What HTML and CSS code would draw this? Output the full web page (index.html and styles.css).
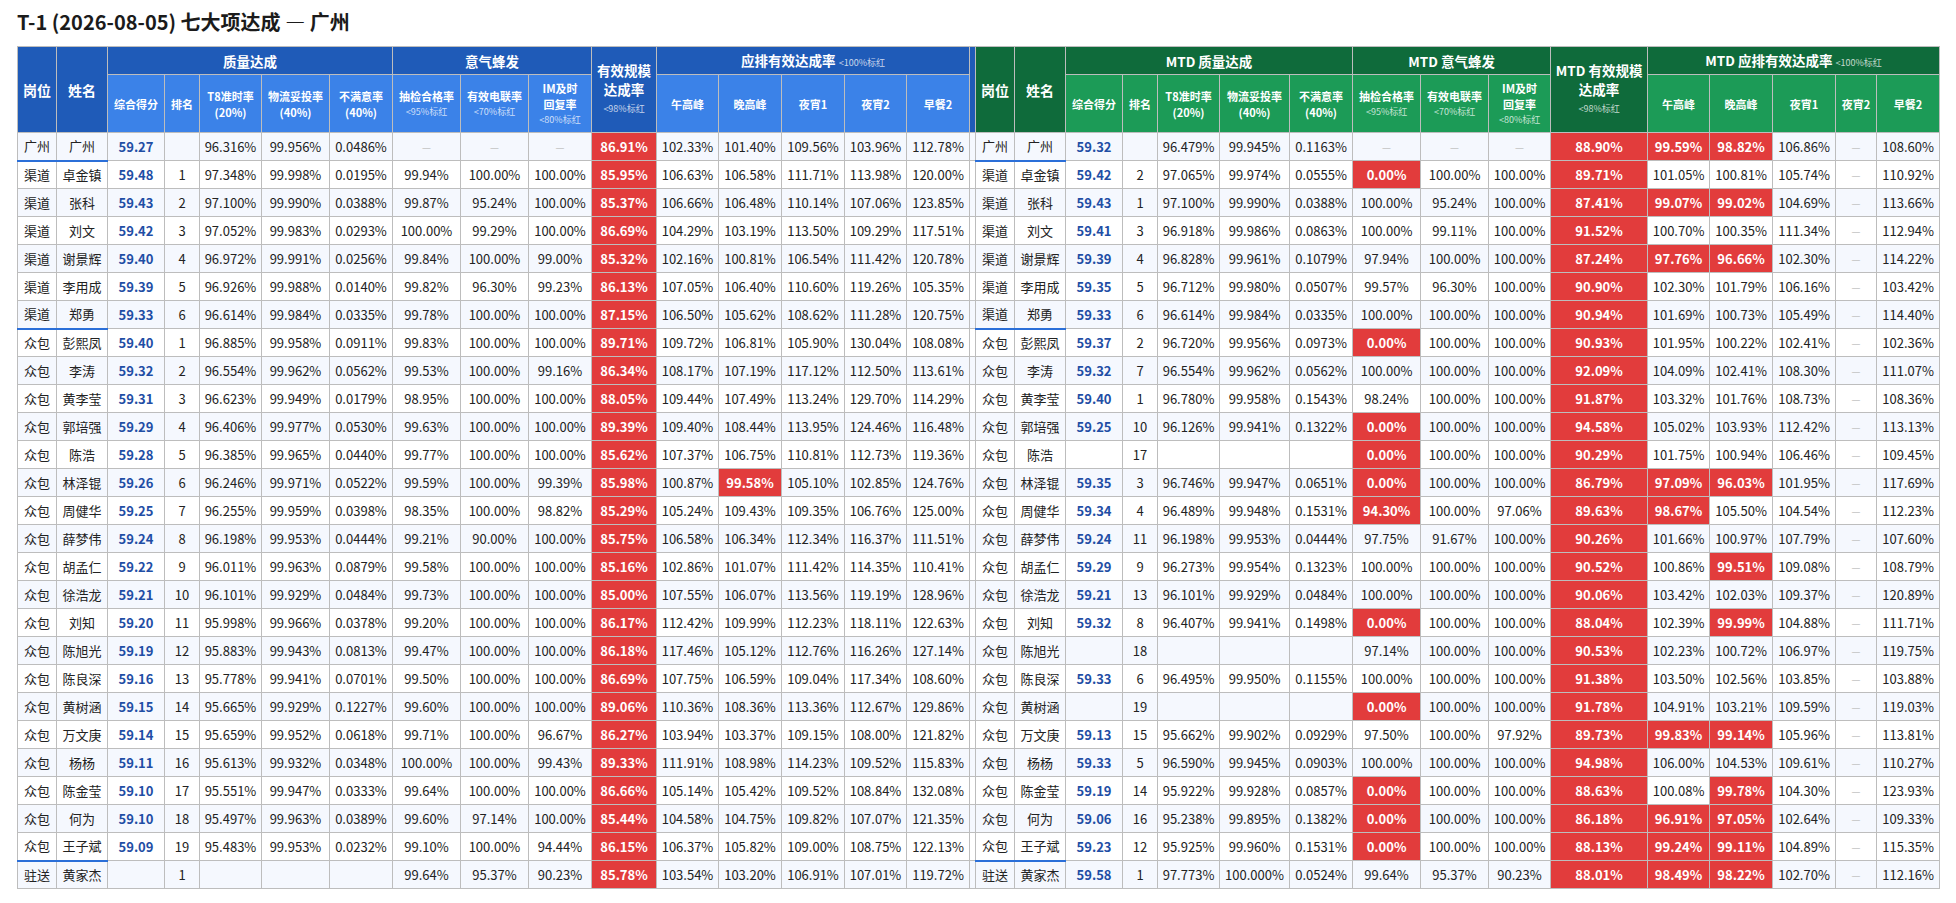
FILE: index.html
```html
<!DOCTYPE html>
<html lang="zh-CN">
<head>
<meta charset="utf-8">
<title>T-1 七大项达成 — 广州</title>
<link rel="stylesheet" href="styles.css">
</head>
<body>
<h1 class="title">T-1 (2026-08-05) 七大项达成 — 广州</h1>
<table class="grid">
<colgroup>
<col class="w39"><col class="w51"><col class="w57"><col class="w35"><col class="w62"><col class="w68"><col class="w63"><col class="w68"><col class="w68"><col class="w63"><col class="w65"><col class="w62"><col class="w63"><col class="w63"><col class="w62"><col class="w63">
<col class="w6">
<col class="w39"><col class="w51"><col class="w57"><col class="w35"><col class="w62"><col class="w70"><col class="w63"><col class="w68"><col class="w68"><col class="w62"><col class="w97"><col class="w62"><col class="w63"><col class="w63"><col class="w41"><col class="w63">
</colgroup>
<thead>
<tr class="h1">
<th rowspan="2" class="bd key">岗位</th>
<th rowspan="2" class="bd key">姓名</th>
<th colspan="5" class="bd">质量达成</th>
<th colspan="3" class="bd">意气蜂发</th>
<th rowspan="2" class="bd big">有效规模<br>达成率<small>&lt;98%标红</small></th>
<th colspan="5" class="bd">应排有效达成率 <small>&lt;100%标红</small></th>
<th rowspan="2" class="bd gap"></th>
<th rowspan="2" class="gd key">岗位</th>
<th rowspan="2" class="gd key">姓名</th>
<th colspan="5" class="gd">MTD 质量达成</th>
<th colspan="3" class="gd">MTD 意气蜂发</th>
<th rowspan="2" class="gd big">MTD 有效规模<br>达成率<small>&lt;98%标红</small></th>
<th colspan="5" class="gd">MTD 应排有效达成率 <small>&lt;100%标红</small></th>
</tr>
<tr class="h2">
<th class="bl">综合得分</th><th class="bl">排名</th><th class="bl">T8准时率<br>(20%)</th><th class="bl">物流妥投率<br>(40%)</th><th class="bl">不满意率<br>(40%)</th><th class="bl">抽检合格率<small>&lt;95%标红</small></th><th class="bl">有效电联率<small>&lt;70%标红</small></th><th class="bl">IM及时<br>回复率<small>&lt;80%标红</small></th><th class="bl">午高峰</th><th class="bl">晚高峰</th><th class="bl">夜宵1</th><th class="bl">夜宵2</th><th class="bl">早餐2</th>
<th class="gl">综合得分</th><th class="gl">排名</th><th class="gl">T8准时率<br>(20%)</th><th class="gl">物流妥投率<br>(40%)</th><th class="gl">不满意率<br>(40%)</th><th class="gl">抽检合格率<small>&lt;95%标红</small></th><th class="gl">有效电联率<small>&lt;70%标红</small></th><th class="gl">IM及时<br>回复率<small>&lt;80%标红</small></th><th class="gl">午高峰</th><th class="gl">晚高峰</th><th class="gl">夜宵1</th><th class="gl">夜宵2</th><th class="gl">早餐2</th>
</tr>
</thead>
<tbody>
<tr class="ge"><td>广州</td><td>广州</td><td class="s">59.27</td><td></td><td>96.316%</td><td>99.956%</td><td>0.0486%</td><td class="d">—</td><td class="d">—</td><td class="d">—</td><td class="r">86.91%</td><td>102.33%</td><td>101.40%</td><td>109.56%</td><td>103.96%</td><td>112.78%</td><td class="gp"></td><td>广州</td><td>广州</td><td class="s">59.32</td><td></td><td>96.479%</td><td>99.945%</td><td>0.1163%</td><td class="d">—</td><td class="d">—</td><td class="d">—</td><td class="r">88.90%</td><td class="r">99.59%</td><td class="r">98.82%</td><td>106.86%</td><td class="d">—</td><td>108.60%</td></tr>
<tr><td>渠道</td><td>卓金镇</td><td class="s">59.48</td><td>1</td><td>97.348%</td><td>99.998%</td><td>0.0195%</td><td>99.94%</td><td>100.00%</td><td>100.00%</td><td class="r">85.95%</td><td>106.63%</td><td>106.58%</td><td>111.71%</td><td>113.98%</td><td>120.00%</td><td class="gp"></td><td>渠道</td><td>卓金镇</td><td class="s">59.42</td><td>2</td><td>97.065%</td><td>99.974%</td><td>0.0555%</td><td class="r">0.00%</td><td>100.00%</td><td>100.00%</td><td class="r">89.71%</td><td>101.05%</td><td>100.81%</td><td>105.74%</td><td class="d">—</td><td>110.92%</td></tr>
<tr><td>渠道</td><td>张科</td><td class="s">59.43</td><td>2</td><td>97.100%</td><td>99.990%</td><td>0.0388%</td><td>99.87%</td><td>95.24%</td><td>100.00%</td><td class="r">85.37%</td><td>106.66%</td><td>106.48%</td><td>110.14%</td><td>107.06%</td><td>123.85%</td><td class="gp"></td><td>渠道</td><td>张科</td><td class="s">59.43</td><td>1</td><td>97.100%</td><td>99.990%</td><td>0.0388%</td><td>100.00%</td><td>95.24%</td><td>100.00%</td><td class="r">87.41%</td><td class="r">99.07%</td><td class="r">99.02%</td><td>104.69%</td><td class="d">—</td><td>113.66%</td></tr>
<tr><td>渠道</td><td>刘文</td><td class="s">59.42</td><td>3</td><td>97.052%</td><td>99.983%</td><td>0.0293%</td><td>100.00%</td><td>99.29%</td><td>100.00%</td><td class="r">86.69%</td><td>104.29%</td><td>103.19%</td><td>113.50%</td><td>109.29%</td><td>117.51%</td><td class="gp"></td><td>渠道</td><td>刘文</td><td class="s">59.41</td><td>3</td><td>96.918%</td><td>99.986%</td><td>0.0863%</td><td>100.00%</td><td>99.11%</td><td>100.00%</td><td class="r">91.52%</td><td>100.70%</td><td>100.35%</td><td>111.34%</td><td class="d">—</td><td>112.94%</td></tr>
<tr><td>渠道</td><td>谢景辉</td><td class="s">59.40</td><td>4</td><td>96.972%</td><td>99.991%</td><td>0.0256%</td><td>99.84%</td><td>100.00%</td><td>99.00%</td><td class="r">85.32%</td><td>102.16%</td><td>100.81%</td><td>106.54%</td><td>111.42%</td><td>120.78%</td><td class="gp"></td><td>渠道</td><td>谢景辉</td><td class="s">59.39</td><td>4</td><td>96.828%</td><td>99.961%</td><td>0.1079%</td><td>97.94%</td><td>100.00%</td><td>100.00%</td><td class="r">87.24%</td><td class="r">97.76%</td><td class="r">96.66%</td><td>102.30%</td><td class="d">—</td><td>114.22%</td></tr>
<tr><td>渠道</td><td>李用成</td><td class="s">59.39</td><td>5</td><td>96.926%</td><td>99.988%</td><td>0.0140%</td><td>99.82%</td><td>96.30%</td><td>99.23%</td><td class="r">86.13%</td><td>107.05%</td><td>106.40%</td><td>110.60%</td><td>119.26%</td><td>105.35%</td><td class="gp"></td><td>渠道</td><td>李用成</td><td class="s">59.35</td><td>5</td><td>96.712%</td><td>99.980%</td><td>0.0507%</td><td>99.57%</td><td>96.30%</td><td>100.00%</td><td class="r">90.90%</td><td>102.30%</td><td>101.79%</td><td>106.16%</td><td class="d">—</td><td>103.42%</td></tr>
<tr class="ge"><td>渠道</td><td>郑勇</td><td class="s">59.33</td><td>6</td><td>96.614%</td><td>99.984%</td><td>0.0335%</td><td>99.78%</td><td>100.00%</td><td>100.00%</td><td class="r">87.15%</td><td>106.50%</td><td>105.62%</td><td>108.62%</td><td>111.28%</td><td>120.75%</td><td class="gp"></td><td>渠道</td><td>郑勇</td><td class="s">59.33</td><td>6</td><td>96.614%</td><td>99.984%</td><td>0.0335%</td><td>100.00%</td><td>100.00%</td><td>100.00%</td><td class="r">90.94%</td><td>101.69%</td><td>100.73%</td><td>105.49%</td><td class="d">—</td><td>114.40%</td></tr>
<tr><td>众包</td><td>彭熙凤</td><td class="s">59.40</td><td>1</td><td>96.885%</td><td>99.958%</td><td>0.0911%</td><td>99.83%</td><td>100.00%</td><td>100.00%</td><td class="r">89.71%</td><td>109.72%</td><td>106.81%</td><td>105.90%</td><td>130.04%</td><td>108.08%</td><td class="gp"></td><td>众包</td><td>彭熙凤</td><td class="s">59.37</td><td>2</td><td>96.720%</td><td>99.956%</td><td>0.0973%</td><td class="r">0.00%</td><td>100.00%</td><td>100.00%</td><td class="r">90.93%</td><td>101.95%</td><td>100.22%</td><td>102.41%</td><td class="d">—</td><td>102.36%</td></tr>
<tr><td>众包</td><td>李涛</td><td class="s">59.32</td><td>2</td><td>96.554%</td><td>99.962%</td><td>0.0562%</td><td>99.53%</td><td>100.00%</td><td>99.16%</td><td class="r">86.34%</td><td>108.17%</td><td>107.19%</td><td>117.12%</td><td>112.50%</td><td>113.61%</td><td class="gp"></td><td>众包</td><td>李涛</td><td class="s">59.32</td><td>7</td><td>96.554%</td><td>99.962%</td><td>0.0562%</td><td>100.00%</td><td>100.00%</td><td>100.00%</td><td class="r">92.09%</td><td>104.09%</td><td>102.41%</td><td>108.30%</td><td class="d">—</td><td>111.07%</td></tr>
<tr><td>众包</td><td>黄李莹</td><td class="s">59.31</td><td>3</td><td>96.623%</td><td>99.949%</td><td>0.0179%</td><td>98.95%</td><td>100.00%</td><td>100.00%</td><td class="r">88.05%</td><td>109.44%</td><td>107.49%</td><td>113.24%</td><td>129.70%</td><td>114.29%</td><td class="gp"></td><td>众包</td><td>黄李莹</td><td class="s">59.40</td><td>1</td><td>96.780%</td><td>99.958%</td><td>0.1543%</td><td>98.24%</td><td>100.00%</td><td>100.00%</td><td class="r">91.87%</td><td>103.32%</td><td>101.76%</td><td>108.73%</td><td class="d">—</td><td>108.36%</td></tr>
<tr><td>众包</td><td>郭培强</td><td class="s">59.29</td><td>4</td><td>96.406%</td><td>99.977%</td><td>0.0530%</td><td>99.63%</td><td>100.00%</td><td>100.00%</td><td class="r">89.39%</td><td>109.40%</td><td>108.44%</td><td>113.95%</td><td>124.46%</td><td>116.48%</td><td class="gp"></td><td>众包</td><td>郭培强</td><td class="s">59.25</td><td>10</td><td>96.126%</td><td>99.941%</td><td>0.1322%</td><td class="r">0.00%</td><td>100.00%</td><td>100.00%</td><td class="r">94.58%</td><td>105.02%</td><td>103.93%</td><td>112.42%</td><td class="d">—</td><td>113.13%</td></tr>
<tr><td>众包</td><td>陈浩</td><td class="s">59.28</td><td>5</td><td>96.385%</td><td>99.965%</td><td>0.0440%</td><td>99.77%</td><td>100.00%</td><td>100.00%</td><td class="r">85.62%</td><td>107.37%</td><td>106.75%</td><td>110.81%</td><td>112.73%</td><td>119.36%</td><td class="gp"></td><td>众包</td><td>陈浩</td><td class="s"></td><td>17</td><td></td><td></td><td></td><td class="r">0.00%</td><td>100.00%</td><td>100.00%</td><td class="r">90.29%</td><td>101.75%</td><td>100.94%</td><td>106.46%</td><td class="d">—</td><td>109.45%</td></tr>
<tr><td>众包</td><td>林泽锟</td><td class="s">59.26</td><td>6</td><td>96.246%</td><td>99.971%</td><td>0.0522%</td><td>99.59%</td><td>100.00%</td><td>99.39%</td><td class="r">85.98%</td><td>100.87%</td><td class="r">99.58%</td><td>105.10%</td><td>102.85%</td><td>124.76%</td><td class="gp"></td><td>众包</td><td>林泽锟</td><td class="s">59.35</td><td>3</td><td>96.746%</td><td>99.947%</td><td>0.0651%</td><td class="r">0.00%</td><td>100.00%</td><td>100.00%</td><td class="r">86.79%</td><td class="r">97.09%</td><td class="r">96.03%</td><td>101.95%</td><td class="d">—</td><td>117.69%</td></tr>
<tr><td>众包</td><td>周健华</td><td class="s">59.25</td><td>7</td><td>96.255%</td><td>99.959%</td><td>0.0398%</td><td>98.35%</td><td>100.00%</td><td>98.82%</td><td class="r">85.29%</td><td>105.24%</td><td>109.43%</td><td>109.35%</td><td>106.76%</td><td>125.00%</td><td class="gp"></td><td>众包</td><td>周健华</td><td class="s">59.34</td><td>4</td><td>96.489%</td><td>99.948%</td><td>0.1531%</td><td class="r">94.30%</td><td>100.00%</td><td>97.06%</td><td class="r">89.63%</td><td class="r">98.67%</td><td>105.50%</td><td>104.54%</td><td class="d">—</td><td>112.23%</td></tr>
<tr><td>众包</td><td>薛梦伟</td><td class="s">59.24</td><td>8</td><td>96.198%</td><td>99.953%</td><td>0.0444%</td><td>99.21%</td><td>90.00%</td><td>100.00%</td><td class="r">85.75%</td><td>106.58%</td><td>106.34%</td><td>112.34%</td><td>116.37%</td><td>111.51%</td><td class="gp"></td><td>众包</td><td>薛梦伟</td><td class="s">59.24</td><td>11</td><td>96.198%</td><td>99.953%</td><td>0.0444%</td><td>97.75%</td><td>91.67%</td><td>100.00%</td><td class="r">90.26%</td><td>101.66%</td><td>100.97%</td><td>107.79%</td><td class="d">—</td><td>107.60%</td></tr>
<tr><td>众包</td><td>胡孟仁</td><td class="s">59.22</td><td>9</td><td>96.011%</td><td>99.963%</td><td>0.0879%</td><td>99.58%</td><td>100.00%</td><td>100.00%</td><td class="r">85.16%</td><td>102.86%</td><td>101.07%</td><td>111.42%</td><td>114.35%</td><td>110.41%</td><td class="gp"></td><td>众包</td><td>胡孟仁</td><td class="s">59.29</td><td>9</td><td>96.273%</td><td>99.954%</td><td>0.1323%</td><td>100.00%</td><td>100.00%</td><td>100.00%</td><td class="r">90.52%</td><td>100.86%</td><td class="r">99.51%</td><td>109.08%</td><td class="d">—</td><td>108.79%</td></tr>
<tr><td>众包</td><td>徐浩龙</td><td class="s">59.21</td><td>10</td><td>96.101%</td><td>99.929%</td><td>0.0484%</td><td>99.73%</td><td>100.00%</td><td>100.00%</td><td class="r">85.00%</td><td>107.55%</td><td>106.07%</td><td>113.56%</td><td>119.19%</td><td>128.96%</td><td class="gp"></td><td>众包</td><td>徐浩龙</td><td class="s">59.21</td><td>13</td><td>96.101%</td><td>99.929%</td><td>0.0484%</td><td>100.00%</td><td>100.00%</td><td>100.00%</td><td class="r">90.06%</td><td>103.42%</td><td>102.03%</td><td>109.37%</td><td class="d">—</td><td>120.89%</td></tr>
<tr><td>众包</td><td>刘知</td><td class="s">59.20</td><td>11</td><td>95.998%</td><td>99.966%</td><td>0.0378%</td><td>99.20%</td><td>100.00%</td><td>100.00%</td><td class="r">86.17%</td><td>112.42%</td><td>109.99%</td><td>112.23%</td><td>118.11%</td><td>122.63%</td><td class="gp"></td><td>众包</td><td>刘知</td><td class="s">59.32</td><td>8</td><td>96.407%</td><td>99.941%</td><td>0.1498%</td><td class="r">0.00%</td><td>100.00%</td><td>100.00%</td><td class="r">88.04%</td><td>102.39%</td><td class="r">99.99%</td><td>104.88%</td><td class="d">—</td><td>111.71%</td></tr>
<tr><td>众包</td><td>陈旭光</td><td class="s">59.19</td><td>12</td><td>95.883%</td><td>99.943%</td><td>0.0813%</td><td>99.47%</td><td>100.00%</td><td>100.00%</td><td class="r">86.18%</td><td>117.46%</td><td>105.12%</td><td>112.76%</td><td>116.26%</td><td>127.14%</td><td class="gp"></td><td>众包</td><td>陈旭光</td><td class="s"></td><td>18</td><td></td><td></td><td></td><td>97.14%</td><td>100.00%</td><td>100.00%</td><td class="r">90.53%</td><td>102.23%</td><td>100.72%</td><td>106.97%</td><td class="d">—</td><td>119.75%</td></tr>
<tr><td>众包</td><td>陈良深</td><td class="s">59.16</td><td>13</td><td>95.778%</td><td>99.941%</td><td>0.0701%</td><td>99.50%</td><td>100.00%</td><td>100.00%</td><td class="r">86.69%</td><td>107.75%</td><td>106.59%</td><td>109.04%</td><td>117.34%</td><td>108.60%</td><td class="gp"></td><td>众包</td><td>陈良深</td><td class="s">59.33</td><td>6</td><td>96.495%</td><td>99.950%</td><td>0.1155%</td><td>100.00%</td><td>100.00%</td><td>100.00%</td><td class="r">91.38%</td><td>103.50%</td><td>102.56%</td><td>103.85%</td><td class="d">—</td><td>103.88%</td></tr>
<tr><td>众包</td><td>黄树涵</td><td class="s">59.15</td><td>14</td><td>95.665%</td><td>99.929%</td><td>0.1227%</td><td>99.60%</td><td>100.00%</td><td>100.00%</td><td class="r">89.06%</td><td>110.36%</td><td>108.36%</td><td>113.36%</td><td>112.67%</td><td>129.86%</td><td class="gp"></td><td>众包</td><td>黄树涵</td><td class="s"></td><td>19</td><td></td><td></td><td></td><td class="r">0.00%</td><td>100.00%</td><td>100.00%</td><td class="r">91.78%</td><td>104.91%</td><td>103.21%</td><td>109.59%</td><td class="d">—</td><td>119.03%</td></tr>
<tr><td>众包</td><td>万文庚</td><td class="s">59.14</td><td>15</td><td>95.659%</td><td>99.952%</td><td>0.0618%</td><td>99.71%</td><td>100.00%</td><td>96.67%</td><td class="r">86.27%</td><td>103.94%</td><td>103.37%</td><td>109.15%</td><td>108.00%</td><td>121.82%</td><td class="gp"></td><td>众包</td><td>万文庚</td><td class="s">59.13</td><td>15</td><td>95.662%</td><td>99.902%</td><td>0.0929%</td><td>97.50%</td><td>100.00%</td><td>97.92%</td><td class="r">89.73%</td><td class="r">99.83%</td><td class="r">99.14%</td><td>105.96%</td><td class="d">—</td><td>113.81%</td></tr>
<tr><td>众包</td><td>杨杨</td><td class="s">59.11</td><td>16</td><td>95.613%</td><td>99.932%</td><td>0.0348%</td><td>100.00%</td><td>100.00%</td><td>99.43%</td><td class="r">89.33%</td><td>111.91%</td><td>108.98%</td><td>114.23%</td><td>109.52%</td><td>115.83%</td><td class="gp"></td><td>众包</td><td>杨杨</td><td class="s">59.33</td><td>5</td><td>96.590%</td><td>99.945%</td><td>0.0903%</td><td>100.00%</td><td>100.00%</td><td>100.00%</td><td class="r">94.98%</td><td>106.00%</td><td>104.53%</td><td>109.61%</td><td class="d">—</td><td>110.27%</td></tr>
<tr><td>众包</td><td>陈金莹</td><td class="s">59.10</td><td>17</td><td>95.551%</td><td>99.947%</td><td>0.0333%</td><td>99.64%</td><td>100.00%</td><td>100.00%</td><td class="r">86.66%</td><td>105.14%</td><td>105.42%</td><td>109.52%</td><td>108.84%</td><td>132.08%</td><td class="gp"></td><td>众包</td><td>陈金莹</td><td class="s">59.19</td><td>14</td><td>95.922%</td><td>99.928%</td><td>0.0857%</td><td class="r">0.00%</td><td>100.00%</td><td>100.00%</td><td class="r">88.63%</td><td>100.08%</td><td class="r">99.78%</td><td>104.30%</td><td class="d">—</td><td>123.93%</td></tr>
<tr><td>众包</td><td>何为</td><td class="s">59.10</td><td>18</td><td>95.497%</td><td>99.963%</td><td>0.0389%</td><td>99.60%</td><td>97.14%</td><td>100.00%</td><td class="r">85.44%</td><td>104.58%</td><td>104.75%</td><td>109.82%</td><td>107.07%</td><td>121.35%</td><td class="gp"></td><td>众包</td><td>何为</td><td class="s">59.06</td><td>16</td><td>95.238%</td><td>99.895%</td><td>0.1382%</td><td class="r">0.00%</td><td>100.00%</td><td>100.00%</td><td class="r">86.18%</td><td class="r">96.91%</td><td class="r">97.05%</td><td>102.64%</td><td class="d">—</td><td>109.33%</td></tr>
<tr class="ge"><td>众包</td><td>王子斌</td><td class="s">59.09</td><td>19</td><td>95.483%</td><td>99.953%</td><td>0.0232%</td><td>99.10%</td><td>100.00%</td><td>94.44%</td><td class="r">86.15%</td><td>106.37%</td><td>105.82%</td><td>109.00%</td><td>108.75%</td><td>122.13%</td><td class="gp"></td><td>众包</td><td>王子斌</td><td class="s">59.23</td><td>12</td><td>95.925%</td><td>99.960%</td><td>0.1531%</td><td class="r">0.00%</td><td>100.00%</td><td>100.00%</td><td class="r">88.13%</td><td class="r">99.24%</td><td class="r">99.11%</td><td>104.89%</td><td class="d">—</td><td>115.35%</td></tr>
<tr><td>驻送</td><td>黄家杰</td><td class="s"></td><td>1</td><td></td><td></td><td></td><td>99.64%</td><td>95.37%</td><td>90.23%</td><td class="r">85.78%</td><td>103.54%</td><td>103.20%</td><td>106.91%</td><td>107.01%</td><td>119.72%</td><td class="gp"></td><td>驻送</td><td>黄家杰</td><td class="s">59.58</td><td>1</td><td>97.773%</td><td>100.000%</td><td>0.0524%</td><td>99.64%</td><td>95.37%</td><td>90.23%</td><td class="r">88.01%</td><td class="r">98.49%</td><td class="r">98.22%</td><td>102.70%</td><td class="d">—</td><td>112.16%</td></tr>
</tbody>
</table>
</body>
</html>
```

FILE: styles.css
```css
* { box-sizing: border-box; }
html, body { margin: 0; background: #fff; }
body {
  font-family: "Noto Sans CJK SC", "Noto Sans", sans-serif;
  color: #222;
  padding: 8px 17px 0;
}
.title {
  margin: 0 0 10px;
  font-size: 20px;
  line-height: 28px;
  font-weight: 700;
  color: #1b1b1b;
}
.grid {
  border-collapse: collapse;
  table-layout: fixed;
  width: 1922px;
}
.w6 { width: 6px; } .w35 { width: 35px; } .w39 { width: 39px; } .w41 { width: 41px; }
.w51 { width: 51px; } .w57 { width: 57px; } .w62 { width: 62px; } .w63 { width: 63px; }
.w65 { width: 65px; } .w68 { width: 68px; } .w70 { width: 70px; } .w97 { width: 97px; }

.grid th, .grid td {
  border: 1px solid #bdbdbd;
  text-align: center;
  vertical-align: middle;
  white-space: nowrap;
  padding: 0;
}
.grid th { color: #fff; font-weight: 700; }
.h1 th { height: 28px; font-size: 13.5px; line-height: 18px; }
.h1 th.key { font-size: 14px; }
.h1 th.big { font-size: 13.5px; line-height: 19px; }
.h2 th { height: 58px; font-size: 11px; line-height: 16px; }
.grid th small {
  display: block;
  font-size: 9px;
  font-weight: 400;
  line-height: 16px;
  color: rgba(255, 255, 255, 0.75);
}
.h1 th.big small { line-height: 20px; }
.h1 th[colspan] small { display: inline; }
.bd { background: #1f5bb8; }
.bl { background: #3b82e8; }
.gd { background: #0f6b3b; }
.gl { background: #1c9b57; }

.grid td {
  height: 28px;
  font-size: 13px;
  line-height: 16px;
  background: #fff;
}
.grid tbody tr:nth-child(odd) td { background: #f5f8fe; }
.grid td.s { color: #1f4ea5; font-weight: 700; }
.grid td.d { color: #c4c4c4; font-size: 10px; }
.grid tbody tr td.r { background: #e23c3c; color: #fff; font-weight: 700; }
.grid tr.ge td:nth-child(1),
.grid tr.ge td:nth-child(2),
.grid tr.ge td:nth-child(18),
.grid tr.ge td:nth-child(19) { border-bottom: 2px solid #2b6fd8; }
```
